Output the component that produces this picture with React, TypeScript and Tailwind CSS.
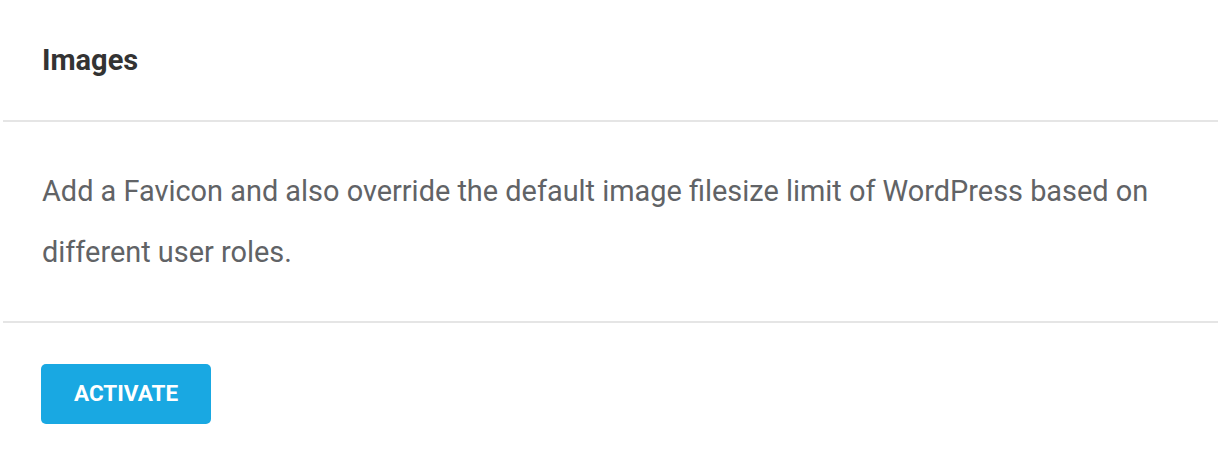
export default function App() {
  return (
    <div className="min-h-screen bg-white font-['Roboto',sans-serif]">
      <div className="mx-[3px] w-[1215px]">
        <div className="px-[39px] pt-[41px] pb-[41px]">
          <h2 className="text-[29px] font-bold leading-[38px] text-[#333333]">Images</h2>
        </div>
        <div className="h-[2px] bg-[#e5e5e5]" />
        <div className="px-[39px] pt-[39px] pb-[38px]">
          <p className="text-[28.9px] leading-[61px] text-[#616366]">
            Add a Favicon and also override the default image filesize limit of WordPress based on
            different user roles.
          </p>
        </div>
        <div className="h-[2px] bg-[#e5e5e5]" />
        <div className="px-[38px] pt-[41px] pb-[50px]">
          <button className="h-[60px] w-[170px] rounded-[5px] bg-[#19a8e2] text-[22.5px] font-bold text-white">
            ACTIVATE
          </button>
        </div>
      </div>
    </div>
  );
}
